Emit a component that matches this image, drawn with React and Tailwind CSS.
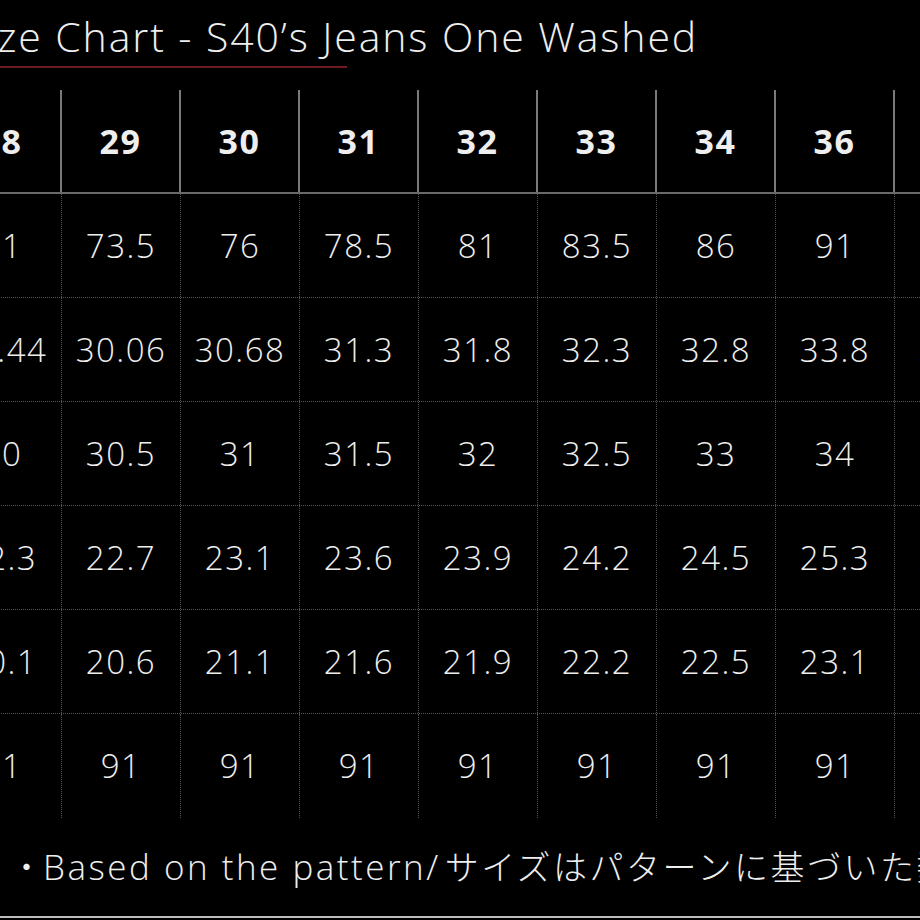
import React from "react";

const sizes = ["28", "29", "30", "31", "32", "33", "34", "36", "38"];

const rows = [
  ["71", "73.5", "76", "78.5", "81", "83.5", "86", "91", "96"],
  ["29.44", "30.06", "30.68", "31.3", "31.8", "32.3", "32.8", "33.8", "34.8"],
  ["30", "30.5", "31", "31.5", "32", "32.5", "33", "34", "35"],
  ["22.3", "22.7", "23.1", "23.6", "23.9", "24.2", "24.5", "25.3", "26.1"],
  ["20.1", "20.6", "21.1", "21.6", "21.9", "22.2", "22.5", "23.1", "23.7"],
  ["91", "91", "91", "91", "91", "91", "91", "91", "91"],
];

const font = { fontFamily: '"Open Sans", "Noto Sans CJK JP", sans-serif' };

export default function App() {
  return (
    <div
      className="w-[920px] h-[920px] bg-black text-[#eeeeee] overflow-hidden flex flex-col"
      style={font}
    >
      {/* title */}
      <div className="h-[90px] flex flex-col">
        <h1 className="ml-[-38px] mt-[8px] h-[56px] text-[41px] leading-[56px] tracking-[1.9px] font-light whitespace-nowrap">
          Size Chart - S40’s Jeans One Washed
        </h1>
        <div className="mt-[2px] w-[347px] h-[2px] bg-[#6e1c22]" />
      </div>

      {/* table */}
      <div className="ml-[-57px] w-[1071px]">
        <div className="grid grid-cols-[repeat(9,119px)] h-[104px] border-b-2 border-[#6a6a6a]">
          {sizes.map((s) => (
            <div
              key={s}
              className="flex items-center justify-center border-r-2 border-[#7a7a7a] text-[34px] tracking-[1.5px] font-bold"
            >
              {s}
            </div>
          ))}
        </div>
        {rows.map((row, i) => (
          <div
            key={i}
            className={
              "grid grid-cols-[repeat(9,119px)] h-[104px] " +
              (i < rows.length - 1 ? "border-b border-dotted border-[#555555]" : "")
            }
          >
            {row.map((v, j) => (
              <div
                key={j}
                className="flex items-center justify-center border-r border-dotted border-[#555555] text-[33px] tracking-[1.5px] font-light"
              >
                {v}
              </div>
            ))}
          </div>
        ))}
      </div>

      {/* note */}
      <div className="flex-1 flex items-center pl-[10px] font-light whitespace-nowrap">
        <span className="w-[37px] text-[33px]">・</span>
        <span className="text-[35px] tracking-[2.5px]">Based on the pattern/</span>
        <span className="text-[34px] tracking-[2.5px] ml-[4px]">サイズはパターンに基づいた数値です。</span>
      </div>
      <div className="h-[2px] bg-[#bdbdbd] mb-[2px]" />
    </div>
  );
}
